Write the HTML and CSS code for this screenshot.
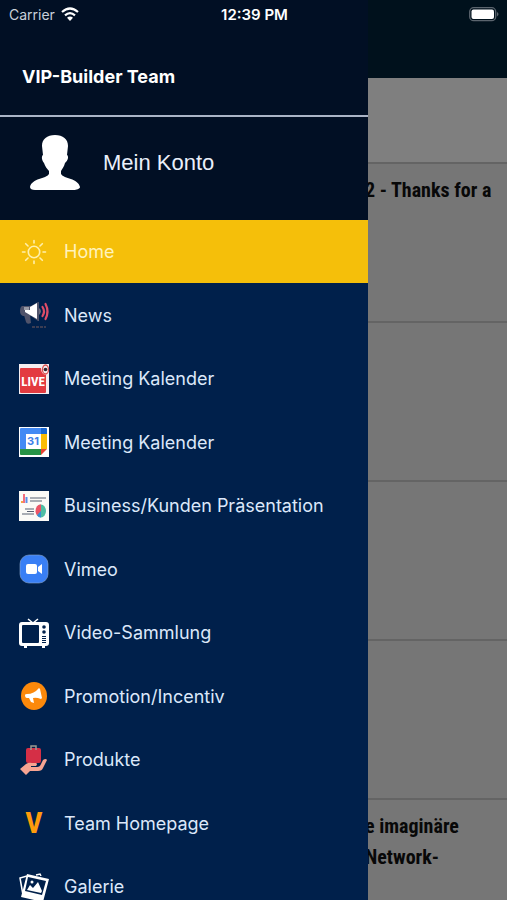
FILE: index.html
```html
<!DOCTYPE html>
<html lang="de">
<head>
    <meta charset="UTF-8">
    <meta name="viewport" content="width=device-width, initial-scale=1.0">
    <title>VIP-Builder Team</title>
    <link rel="stylesheet" href="styles.css">
</head>
<body>

<!-- News feed behind the drawer -->
<main class="feed">
    <div class="feed-header"></div>
    <div class="feed-filter"></div>
    <article class="post"><h2>2 - Thanks for a</h2></article>
    <article class="post"></article>
    <article class="post"></article>
    <article class="post"></article>
    <article class="post"><h2>e imaginäre<br>Network-</h2></article>
</main>

<aside class="drawer">
    <header class="drawer-header">
        <h1>VIP-Builder Team</h1>
    </header>
    <a class="account" href="#">
        <svg class="avatar" viewBox="0 0 50 55">
            <path fill="#fff" d="M25 0C33 0 38 4 38 11L37 20C39 21 38 26 35 28C34 32 32 34 31 36V39C34 44 48 43 50 52C50 54 46 55 44 55H5C2 55 0 54 0 52C2 43 16 44 19 39V36C17 34 15 31 14 28C12 26 11 21 13 20L12 11C12 4 17 0 25 0Z"/>
        </svg>
        <span>Mein Konto</span>
    </a>
    <nav>
        <ul class="menu">
            <li><a class="active" href="#">
                <svg class="icon" viewBox="0 0 30 30" fill="none" stroke="#fff0ac" stroke-width="1.600" stroke-linecap="round">
                    <circle cx="15" cy="15" r="5.700"/>
                    <path d="M15 3.500V6M15 24v2.500M3.500 15H6M24 15h2.500M6.700 6.700L9 9M21 21l2.300 2.300M6.700 23.300L9 21M21 9l2.300-2.300"/>
                </svg>
                <span>Home</span>
            </a></li>
            <li><a href="#">
                <svg class="icon" viewBox="0 0 30 30">
                    <path fill="#50536a" d="M5 15h6l1 8q-4 2-5-1zM3 6h9l7-4h1v19h-1l-7-5H4Q1 15 1 11Q1 7 3 6z"/>
                    <path fill="#9a9ba6" d="M5 7h5v3H5z"/>
                    <path fill="#fff" d="M11 7L18 3V19L11 15L6 12V10H11z"/>
                    <path fill="#6a6b7c" d="M20 8q4 3 0 7z"/>
                    <path fill="none" stroke="#df4d68" stroke-width="2.200" stroke-linecap="round" d="M23.500 7q3 4.500 0 9M26.500 4q4 7.500 0 15"/>
                    <path fill="none" stroke="#3b3d53" stroke-width="2" stroke-dasharray="3 1" d="M13 27h14"/>
                </svg>
                <span>News</span>
            </a></li>
            <li><a href="#">
                <svg class="icon" viewBox="0 0 30 30">
                    <rect width="30" height="30" fill="#f5eef0"/>
                    <path fill="#e33b40" d="M1 5q0-1 1-1h20q0 6 5 7v17q0 1-1 1H2q-1 0-1-1z"/>
                    <text class="icon-live" x="14" y="22" text-anchor="middle">LIVE</text>
                    <ellipse cx="26.500" cy="5.500" rx="3" ry="4.500" fill="#f5eef0" stroke="#dc5050" stroke-width="1.300"/>
                    <circle cx="26.500" cy="5.500" r="1.800" fill="#34252c"/>
                </svg>
                <span>Meeting Kalender</span>
            </a></li>
            <li><a href="#">
                <svg class="icon" viewBox="0 0 30 30">
                    <rect width="30" height="30" fill="#fff"/>
                    <path fill="#438af4" d="M1 2Q1 1 2 1H22V7H7V22H1z"/>
                    <path fill="#1967d2" d="M22 1h5q1 0 1 1v5h-6z"/>
                    <path fill="#fbbc05" d="M22 7h6v15h-6z"/>
                    <path fill="#279346" d="M1 22h21v6H2q-1 0-1-1z"/>
                    <path fill="#e94435" d="M22 22h6l-6 6z"/>
                    <text class="icon-day" x="14" y="18" text-anchor="middle">31</text>
                </svg>
                <span>Meeting Kalender</span>
            </a></li>
            <li><a href="#">
                <svg class="icon" viewBox="0 0 30 30">
                    <rect width="30" height="30" fill="#fbfaf7"/>
                    <path fill="#f26d7d" d="M4 3h2v9H4z"/>
                    <path fill="#5a8ee6" d="M6.500 6h2v6H6.500z"/>
                    <path fill="#f5a344" d="M2 10h2v2H2z"/>
                    <path stroke="#596073" stroke-width="1.200" d="M11 7h16M11 10h12M6 18h9M8 20.500h7M3 23h12"/>
                    <ellipse cx="22" cy="20" rx="5" ry="6.500" fill="#4fbda3"/>
                    <path fill="#ed5366" d="M22 13.500A5 6.500 0 0 0 18 24.500L22 20z"/>
                    <path fill="#3a8ed4" d="M22 20v6.500a5 6.500 0 0 1-4-2z"/>
                </svg>
                <span>Business/Kunden Präsentation</span>
            </a></li>
            <li><a href="#">
                <svg class="icon" viewBox="0 0 30 30">
                    <rect x="1" y="1" width="28" height="28" rx="9" fill="#397ff5" stroke="#8aa7d1" stroke-width=".6"/>
                    <rect x="7" y="10" width="11" height="10" rx="2" fill="#fff"/>
                    <path fill="#fff" d="M19 13l4-3v10l-4-3z"/>
                </svg>
                <span>Vimeo</span>
            </a></li>
            <li><a href="#">
                <svg class="icon" viewBox="0 0 30 30">
                    <path fill="none" stroke="#fff" stroke-width="1.500" d="M9 1l5 4 5-4"/>
                    <path fill="#fff" fill-rule="evenodd" d="M3 4h24q3 0 3 3v18q0 3-3 3h-1v2h-3v-2H8v2H5v-2H3q-3 0-3-3V7q0-3 3-3zM4 7Q3 7 3 8V24q0 1 1 1H19q1 0 1-1V8q0-1-1-1z"/>
                    <circle cx="25" cy="9" r="1.800" fill="#00204b"/>
                    <circle cx="25" cy="14" r="1.800" fill="#00204b"/>
                    <path fill="#00204b" d="M23 18h4v1h-4zM23 20h4v1h-4zM23 22h4v1h-4zM23 24h4v1h-4z"/>
                </svg>
                <span>Video-Sammlung</span>
            </a></li>
            <li><a href="#">
                <svg class="icon" viewBox="0 0 30 30">
                    <ellipse cx="15" cy="15" rx="13" ry="14" fill="#fc890b"/>
                    <path fill="#fff" d="M6 14q0-1 2-1 7 0 12-6l1 1 2 9-1 1q-5-2-8-1l1 5-3-1-2-4H8q-2 0-2-3z"/>
                </svg>
                <span>Promotion/Incentiv</span>
            </a></li>
            <li><a href="#">
                <svg class="icon" viewBox="0 0 30 30">
                    <rect x="7" y="3" width="15" height="15" rx="2" fill="#d52f46"/>
                    <path fill="none" stroke="#9a9a91" stroke-width="1.500" d="M12 5V1h5v4"/>
                    <path fill="#f6a492" d="M1 24l6-5q3-2 6-1h4q2 1 0 3h-5v1h6q3 0 4-3l2-4q3-2 4 0l-4 8q-1 3-5 3h-8l-4 4z"/>
                </svg>
                <span>Produkte</span>
            </a></li>
            <li><a href="#">
                <svg class="icon" viewBox="0 0 30 30">
                    <text class="icon-v" x="15" y="25" text-anchor="middle">V</text>
                </svg>
                <span>Team Homepage</span>
            </a></li>
            <li><a href="#">
                <svg class="icon" viewBox="0 0 30 30">
                    <path fill="none" stroke="#fff" stroke-width="1.500" d="M8 4L1 6l3 17M17 3l4-1 1 2"/>
                    <path fill="#fff" fill-rule="evenodd" d="M8 2l22 5-6 23L2 25zM9 5L6 19l17 4 4-14z"/>
                    <path fill="#fff" d="M8 18l3-5 3 3 5-6 4 9-1 2z"/>
                    <circle cx="13" cy="10" r="1.500" fill="#fff"/>
                </svg>
                <span>Galerie</span>
            </a></li>
        </ul>
    </nav>
</aside>

<div class="status-bar">
    <div class="carrier">
        <span>Carrier</span>
        <svg class="wifi" viewBox="0 0 18 14">
            <path fill="none" stroke="#fff" stroke-width="2.200" d="M1 5q8-7 16 0M4 8.300q5-4.400 10 0"/>
            <path fill="#fff" d="M9 14L6 10.700q3-2.200 6 0z"/>
        </svg>
    </div>
    <time>12:39 PM</time>
    <svg class="battery" viewBox="0 0 31 15">
        <rect x=".7" y=".7" width="26" height="13" rx="4" fill="none" stroke="#5b656e" stroke-width="1.300"/>
        <rect x="2.500" y="2.500" width="22.500" height="9.500" rx="2" fill="#fff"/>
        <path fill="#5b656e" d="M28 5q3 2 0 4.500z"/>
    </svg>
</div>

</body>
</html>
```
FILE: styles.css
```css
body {
    margin: 0;
    height: 100vh;
    overflow: hidden;
    position: relative;
    background-color: #767676;
    font-family: Inter, "Liberation Sans", sans-serif;
}
h1, h2 {
    margin: 0;
}
a {
    color: inherit;
    text-decoration: none;
}

/* feed */
.feed {
    height: 100%;
    overflow: hidden;
}
.feed-header {
    height: 78px;
    background-color: #00111c;
}
.feed-filter {
    height: 84px;
    background-color: #7f7f7f;
}
.post {
    box-sizing: border-box;
    height: 159px;
    border-top: 2px solid #646464;
    padding: 11px 0 0 72%;
}
.post h2 {
    font-family: "Roboto Condensed", "Liberation Sans Narrow", sans-serif;
    font-size: 20px;
    line-height: 31px;
    color: #080808;
    white-space: nowrap;
}

/* drawer */
.drawer {
    position: absolute;
    top: 0;
    left: 0;
    bottom: 0;
    width: 72.5%;
    overflow: hidden;
    background-color: #00204b;
}
.drawer-header {
    box-sizing: border-box;
    height: 117px;
    padding: 66px 22px 0;
    background-color: #010f24;
    border-bottom: 2px solid #aab4c6;
}
.drawer-header h1 {
    font-size: 18px;
    line-height: 22px;
    color: #fff;
}
.account {
    display: flex;
    align-items: center;
    gap: 23px;
    height: 103px;
    box-sizing: border-box;
    padding: 0 30px 12px;
    background-color: #010f24;
    color: #eaf0fb;
    font-family: "Liberation Sans", Arial, sans-serif;
    font-size: 22px;
}
.avatar {
    width: 50px;
    height: 55px;
}
.menu {
    list-style: none;
    margin: 0;
    padding: 0;
}
.menu a {
    display: flex;
    align-items: center;
    gap: 15px;
    height: 64px;
    padding: 0 19px;
    color: #dce8fa;
    font-size: 18px;
}
.menu li:nth-child(odd) a {
    height: 63px;
}
.menu .active {
    background-color: #f5bf0a;
    color: #fff3bd;
}
.icon {
    width: 30px;
    height: 30px;
    flex-shrink: 0;
    overflow: visible;
}
.icon-day {
    font-size: 11px;
    font-weight: bold;
    fill: #3f7fe8;
}
.icon-live {
    font-family: "Roboto Condensed", sans-serif;
    font-size: 13px;
    font-weight: bold;
    fill: #fff;
}
.icon-v {
    font-family: "Roboto Condensed", sans-serif;
    font-size: 30px;
    font-weight: bold;
    fill: #ff9b0b;
}

/* status bar */
.status-bar {
    position: absolute;
    top: 0;
    left: 0;
    right: 0;
    height: 28px;
    display: grid;
    grid-template-columns: 1fr auto 1fr;
    align-items: center;
    padding: 0 7px 0 9px;
    color: #fff;
    font-size: 14px;
}
.carrier {
    display: flex;
    align-items: center;
    gap: 6px;
    color: #c9d0da;
}
.wifi {
    width: 18px;
    height: 14px;
}
.status-bar time {
    font-size: 15px;
    font-weight: 600;
}
.battery {
    width: 31px;
    height: 15px;
    justify-self: end;
}
```
